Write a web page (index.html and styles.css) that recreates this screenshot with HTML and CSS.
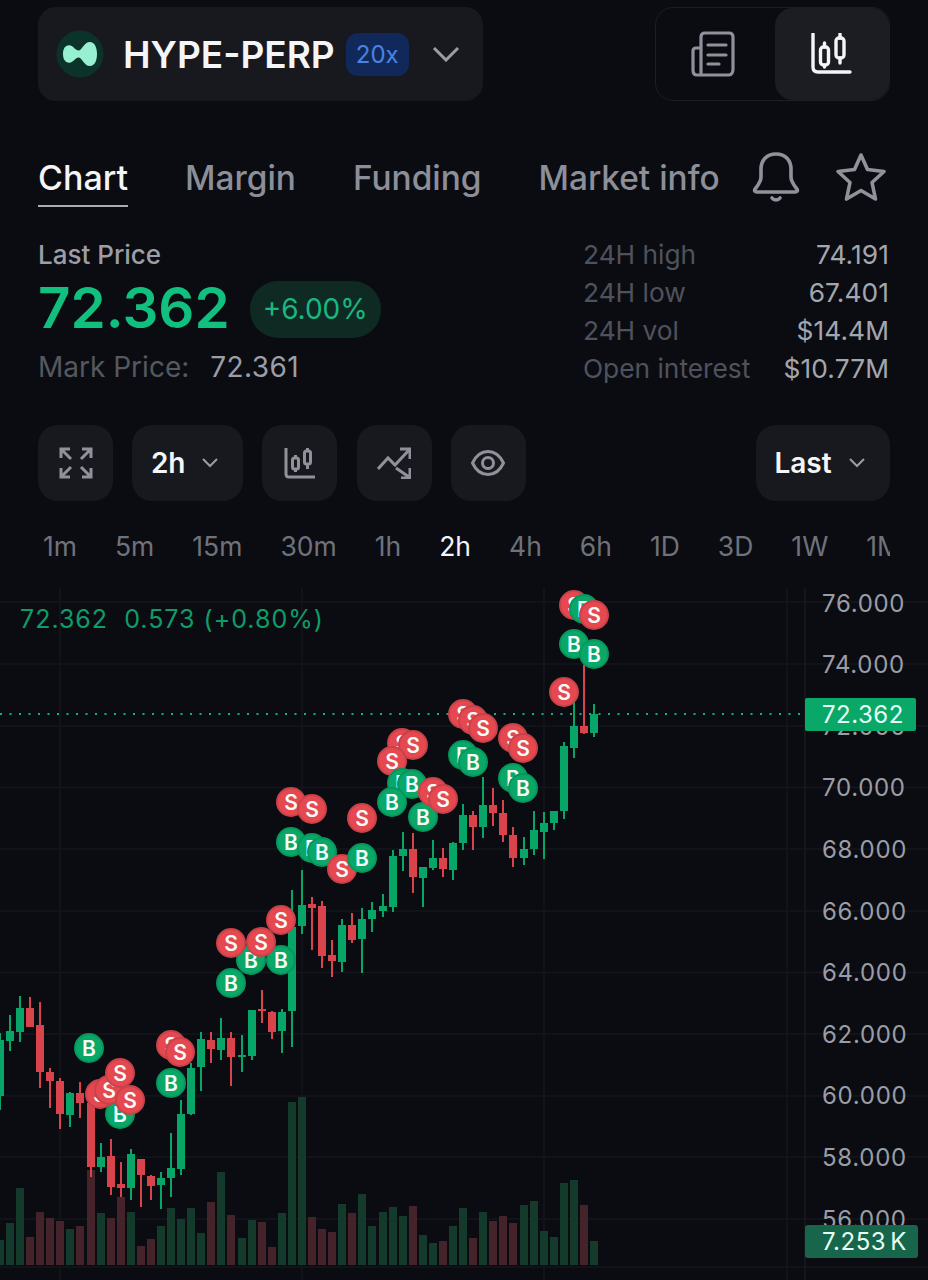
FILE: index.html
```html
<!DOCTYPE html>
<html lang="en">
<head>
    <meta charset="UTF-8">
    <meta name="viewport" content="width=device-width, initial-scale=1.0">
    <title>HYPE-PERP</title>
    <link rel="stylesheet" href="styles.css">
</head>
<body>
    <div class="page">
        <header class="top-bar">
            <div class="market-picker">
                <svg class="coin-logo" viewBox="0 0 48 48">
                    <circle cx="24" cy="24" r="23.5" fill="#0c3329"/>
                    <path d="M7 24C7 17 11 14.500 14.500 15.500C18 16.500 19.500 20.500 22.500 20.500C26 20.500 28 12 34 12C38.500 12 41 17 41 24C41 31 38.500 36 34 36C28 36 26 27.500 22.500 27.500C19.500 27.500 18 31.500 14.500 32.500C11 33.500 7 31 7 24Z" fill="#97f0d2"/>
                </svg>
                <span class="market-name">HYPE-PERP</span>
                <span class="leverage">20x</span>
                <svg class="chevron-big" viewBox="0 0 28 16"><path d="M2 2L14 14L26 2"/></svg>
            </div>
            <div class="view-toggle">
                <div class="toggle-item">
                    <svg class="news-icon" viewBox="0 0 44 46">
                        <path d="M10 42V6C10 3.500 11.500 2 14 2H38C40.500 2 42 3.500 42 6V38C42 41 40.500 44 38 44H6C3.500 44 2 42 2 39V20C2 18 3 17 5 17H10"/>
                        <path d="M17 14H35M17 24H35M17 33H28"/>
                    </svg>
                </div>
                <div class="toggle-item toggle-active">
                    <svg class="candles-icon" viewBox="0 0 42 42">
                        <path d="M3 1V34C3 37 4.500 39 8 39H40"/>
                        <rect x="10.500" y="14" width="8" height="18" rx="3"/>
                        <rect x="26" y="5" width="8" height="20" rx="3"/>
                        <path d="M14.500 10V14M14.500 32V34M30 1V5M30 25V30"/>
                    </svg>
                </div>
            </div>
        </header>

        <nav class="tabs">
            <div class="tab-list">
                <a class="tab tab-active">Chart</a>
                <a class="tab">Margin</a>
                <a class="tab">Funding</a>
                <a class="tab">Market info</a>
            </div>
            <div class="tab-icons">
                <svg class="bell-icon" viewBox="0 0 48 50">
                    <path d="M24 2C14 2 9 9 9 17V25C9 30 6 33 3 37C2 39 3 40 5 40H43C45 40 46 39 45 37C42 33 39 30 39 25V17C39 9 34 2 24 2Z"/>
                    <path d="M20 46C22 48.500 26 48.500 28 46"/>
                </svg>
                <svg class="star-icon" viewBox="0 0 54 50">
                    <path d="M27 3L33.500 17.500L50 19.500L38 30.500L41.500 47L27 38.500L12.500 47L16 30.500L4 19.500L20.500 17.500Z"/>
                </svg>
            </div>
        </nav>

        <section class="stats">
            <div class="price-block">
                <div class="price-label">Last Price</div>
                <div class="price-row">
                    <span class="last-price">72.362</span>
                    <span class="change-pill">+6.00%</span>
                </div>
                <div class="mark-row"><span class="mark-label">Mark Price:</span><span class="mark-value">72.361</span></div>
            </div>
            <dl class="day-stats">
                <dt>24H high</dt><dd>74.191</dd>
                <dt>24H low</dt><dd>67.401</dd>
                <dt>24H vol</dt><dd>$14.4M</dd>
                <dt>Open interest</dt><dd>$10.77M</dd>
            </dl>
        </section>

        <div class="toolbar">
            <button class="tool-btn">
                <svg class="tool-icon" viewBox="0 0 34 32">
                    <path d="M2 11V2H11M2 2L12 12M32 11V2H23M32 2L22 12M2 21V30H11M2 30L12 20M32 21V30H23M32 30L22 20"/>
                </svg>
            </button>
            <button class="tool-btn tool-wide">2h
                <svg class="chevron-small" viewBox="0 0 16 10"><path d="M1 1L8 8L15 1"/></svg>
            </button>
            <button class="tool-btn">
                <svg class="tool-icon" viewBox="0 0 32 32">
                    <path d="M2 1V27C2 29 3 30 5 30H31"/>
                    <rect x="8.500" y="11" width="6" height="11" rx="2"/>
                    <rect x="20.500" y="4" width="6" height="13" rx="2"/>
                    <path d="M11.500 8V11M11.500 22V25M23.500 1V4M23.500 17V22"/>
                </svg>
            </button>
            <button class="tool-btn">
                <svg class="tool-icon" viewBox="0 0 34 32">
                    <path d="M1 22L11 11L18 18L32 3M23 2H33V12M19 21L32 30M33 21V31H24"/>
                </svg>
            </button>
            <button class="tool-btn">
                <svg class="tool-icon" viewBox="0 0 34 26">
                    <path d="M1.500 13C5 5.500 10.500 1.500 17 1.500C23.500 1.500 29 5.500 32.500 13C29 20.500 23.500 24.500 17 24.500C10.500 24.500 5 20.500 1.500 13Z"/>
                    <circle cx="17" cy="13" r="5.500"/>
                </svg>
            </button>
            <button class="tool-btn tool-last">Last
                <svg class="chevron-small" viewBox="0 0 16 10"><path d="M1 1L8 8L15 1"/></svg>
            </button>
        </div>

        <div class="intervals">
            <span>1m</span><span>5m</span><span>15m</span><span>30m</span><span>1h</span>
            <span class="interval-active">2h</span>
            <span>4h</span><span>6h</span><span>1D</span><span>3D</span><span>1W</span><span>1M</span>
        </div>
    </div>

    <svg id="chart" class="chart" viewBox="0 586 928 694"></svg>

    <script src="chart.js"></script>
</body>
</html>
```
FILE: styles.css
```css
* {
    box-sizing: border-box;
}
body {
    font-family: Inter, "Liberation Sans", sans-serif;
    background-color: #0b0c12;
    margin: 0;
    height: 1280px;
    overflow: hidden;
    color: #9a9da6;
}
.page {
    padding: 7px 38px 0;
    height: 586px;
}
svg {
    display: block;
    fill: none;
}

/* header */
.top-bar {
    display: flex;
    justify-content: space-between;
    height: 94px;
}
.market-picker {
    width: 445px;
    background-color: #18191f;
    border-radius: 18px;
    display: flex;
    align-items: center;
    padding-left: 18px;
}
.coin-logo {
    width: 48px;
    height: 48px;
}
.market-name {
    margin-left: 19px;
    font-size: 37px;
    font-weight: 600;
    color: #f4f5f7;
}
.leverage {
    margin-left: 11px;
    width: 63px;
    height: 43px;
    line-height: 43px;
    text-align: center;
    background-color: #11295a;
    border-radius: 12px;
    font-size: 24px;
    color: #4a83e0;
}
.chevron-big {
    width: 28px;
    height: 16px;
    margin-left: 23px;
}
.chevron-big path {
    stroke: #9a9da6;
    stroke-width: 3;
}
.view-toggle {
    width: 235px;
    border: 1px solid #1d1e25;
    border-radius: 18px;
    display: flex;
}
.toggle-item {
    width: 119px;
    padding-right: 4px;
    display: flex;
    align-items: center;
    justify-content: center;
}
.toggle-active {
    width: 115px;
    padding-right: 2px;
    background-color: #1c1d23;
    border-radius: 18px;
}
.news-icon {
    width: 44px;
    height: 46px;
}
.news-icon path {
    stroke: #8f929b;
    stroke-width: 3.2;
    stroke-linecap: round;
    stroke-linejoin: round;
}
.candles-icon {
    width: 42px;
    height: 42px;
}
.candles-icon path,
.candles-icon rect {
    stroke: #f4f5f7;
    stroke-width: 3.4;
    stroke-linecap: round;
}

/* tabs */
.tabs {
    display: flex;
    justify-content: space-between;
    margin-top: 51px;
    height: 55px;
}
.tab-list {
    display: flex;
    gap: 57px;
}
.tab {
    font-size: 33.4px;
    font-weight: 500;
    line-height: 52px;
    height: 55px;
    color: #8c8f99;
    white-space: nowrap;
}
.tab-active {
    font-size: 34px;
    color: #f4f5f7;
    border-bottom: 2px solid #a9acb5;
}
.tab-icons {
    margin-right: 1px;
    display: flex;
    gap: 33px;
}
.tab-icons path {
    stroke: #8f929b;
    stroke-width: 3.6;
    stroke-linecap: round;
    stroke-linejoin: round;
}
.bell-icon {
    width: 48px;
    height: 50px;
}
.star-icon {
    width: 56px;
    height: 50px;
}

/* price stats */
.stats {
    display: flex;
    justify-content: space-between;
    margin-top: 31px;
    height: 148px;
}
.price-label {
    font-size: 26px;
    font-weight: 500;
    line-height: 34px;
    color: #9b9ea7;
}
.price-row {
    display: flex;
    align-items: center;
    gap: 20px;
    height: 57px;
    margin-top: 9px;
}
.last-price {
    font-size: 56.5px;
    font-weight: 600;
    color: #11c07f;
    margin-bottom: 4px;
}
.change-pill {
    width: 131px;
    height: 57px;
    line-height: 57px;
    text-align: center;
    border-radius: 28px;
    background-color: #0e2a23;
    color: #1bb781;
    font-size: 28px;
}
.mark-row {
    margin-top: 10px;
    font-size: 28px;
    line-height: 38px;
}
.mark-label {
    color: #55585f;
}
.mark-value {
    margin-left: 21px;
    color: #9b9ea7;
    letter-spacing: 0.4px;
}
.day-stats {
    margin: 0;
    width: 307px;
    display: grid;
    grid-template-columns: auto auto;
    justify-content: space-between;
    grid-auto-rows: 38px;
    font-size: 26.3px;
    line-height: 34px;
}
.day-stats dt {
    color: #4f525c;
}
.day-stats dd {
    margin: 0 1px 0 0;
    text-align: right;
    color: #a3a6ae;
    letter-spacing: 0.1px;
}

/* toolbar */
.toolbar {
    display: flex;
    gap: 19.2px;
    margin-top: 39px;
}
.tool-btn {
    width: 75px;
    height: 76px;
    border: none;
    border-radius: 20px;
    background-color: #18191f;
    display: flex;
    align-items: center;
    justify-content: center;
    font-family: inherit;
    font-size: 28px;
    font-weight: 600;
    color: #f4f5f7;
    padding: 0;
}
.tool-wide {
    width: 111px;
    gap: 17px;
    padding-right: 6px;
}
.tool-last {
    width: 134px;
    gap: 17px;
    margin-left: auto;
    padding-right: 7px;
}
.tool-icon {
    width: 34px;
    height: 32px;
}
.tool-icon path,
.tool-icon rect,
.tool-icon circle {
    stroke: #8f929b;
    stroke-width: 3;
}
.chevron-small {
    width: 16px;
    height: 10px;
}
.chevron-small path {
    stroke: #9a9da6;
    stroke-width: 2;
}

/* interval row */
.intervals {
    display: flex;
    gap: 38px;
    margin-top: 27px;
    padding-left: 5px;
    overflow: hidden;
    white-space: nowrap;
    font-size: 26.5px;
    line-height: 36px;
    color: #6f727b;
}
.interval-active {
    color: #f4f5f7;
}

/* chart */
.chart {
    width: 928px;
    height: 694px;
}
.grid-line {
    stroke: #15161c;
    stroke-width: 1.500;
}
.axis-line {
    stroke: #191a20;
    stroke-width: 1.500;
}
.last-line {
    stroke: #17b07a;
    stroke-width: 2;
    stroke-dasharray: 2 7.500;
}
.up {
    fill: #07a568;
}
.down {
    fill: #d8434c;
}
.vol-up {
    fill: #143a2c;
}
.vol-down {
    fill: #45232a;
}
.axis-label {
    fill: #9a9da6;
    font-size: 24px;
    letter-spacing: 0.7px;
}
.legend {
    fill: #0f9c68;
    font-size: 25px;
    letter-spacing: 1px;
    white-space: pre;
}
.tag-price {
    fill: #0aa868;
}
.tag-volume {
    fill: #17654a;
}
.tag-text {
    fill: #e6fff4;
    font-size: 24px;
    letter-spacing: 0.5px;
    word-spacing: -3px;
}
.marker-b {
    fill: #0aa868;
    stroke: #07965c;
    stroke-width: 2;
}
.marker-s {
    fill: #e5484f;
    stroke: #c8424a;
    stroke-width: 2;
}
.marker-letter {
    fill: #f6fbf8;
    font-size: 21px;
    font-weight: 600;
    text-anchor: middle;
}
```
FILE: chart.js
```js
// [wick top, body top, body bottom, wick bottom, up/down], left to right
const candles = [
    [1033,1040,1096,1110,1],[1015,1031,1041,1051,1],[996,1008,1032,1042,1],[997,1008,1027,1027,0],
    [1002,1025,1072,1088,0],[1068,1072,1081,1108,0],[1078,1081,1114,1129,0],[1092,1093,1115,1127,1],
    [1082,1093,1103,1118,0],[1102,1103,1167,1177,0],[1143,1157,1167,1172,1],[1139,1156,1187,1195,0],
    [1162,1184,1188,1197,0],[1149,1154,1188,1200,1],[1159,1159,1175,1207,0],[1175,1176,1186,1200,0],
    [1172,1178,1185,1209,1],[1133,1168,1178,1197,1],[1100,1114,1169,1175,1],[1063,1068,1114,1115,1],
    [1032,1039,1067,1091,1],[1032,1040,1049,1063,0],[1018,1038,1050,1060,1],[1032,1038,1057,1086,0],
    [1035,1055,1056,1072,1],[1010,1010,1056,1060,1],[990,1009,1011,1023,0],[1011,1012,1032,1039,0],
    [1009,1012,1031,1053,1],[890,927,1011,1047,1],[870,905,926,934,1],[897,904,908,950,0],
    [901,906,956,968,0],[940,955,961,977,0],[919,925,962,972,1],[913,925,940,943,0],
    [908,919,939,973,1],[902,910,919,932,1],[894,906,911,917,1],[850,856,907,912,1],
    [832,849,856,871,1],[833,849,877,893,0],[867,867,878,907,1],[840,858,868,870,1],
    [848,858,869,877,0],[842,843,870,880,1],[804,815,843,850,1],[811,815,827,850,0],
    [777,805,827,838,1],[788,805,813,826,0],[800,813,835,842,0],[827,835,858,867,0],
    [837,849,858,865,1],[811,830,849,855,1],[812,823,832,859,1],[811,811,823,830,1],
    [742,746,811,819,1],[702,726,748,758,1],[665,726,733,734,0],[704,714,733,737,1]
];
// top of each volume bar, same order
const volumes = [
    1240,1223,1188,1237,1212,1218,1221,1229,1226,1170,1213,1218,1197,1212,1246,1239,
    1226,1208,1219,1208,1233,1202,1172,1215,1238,1220,1222,1247,1213,1102,1097,1217,
    1229,1232,1204,1213,1194,1226,1212,1207,1216,1206,1235,1243,1241,1226,1208,1238,
    1212,1221,1216,1223,1205,1201,1231,1237,1183,1180,1205,1241
];
// trade markers in paint order
const markers = [
    ['B',89,1048],['B',120,1114],['S',100,1094],['S',109,1090],['S',120,1073],['S',130,1100],
    ['S',171,1045],['S',180,1052],['B',171,1083],
    ['B',231,983],['B',251,960],['B',281,960],['S',231,943],['S',261,942],['S',281,920],
    ['S',291,802],['S',312,809],['B',291,842],['B',312,848],['B',322,852],['S',342,869],['B',362,858],['S',362,818],
    ['S',402,743],['S',413,745],['S',392,761],['B',402,783],['B',412,784],['B',392,802],['B',423,817],
    ['S',433,792],['S',443,799],
    ['S',463,714],['S',473,720],['S',483,728],['B',463,755],['B',473,762],
    ['S',513,738],['S',523,748],['B',513,778],['B',523,788],
    ['S',574,605],['B',584,609],['S',594,615],['B',574,644],['B',594,654],['S',564,692]
];
const gridRows = [602,664,726,787.5,849,911,972.5,1034,1096,1157,1219,1267];
const gridCols = [60,302,544,787];
const axisPrices = ['76.000','74.000','72.000','70.000','68.000','66.000','64.000','62.000','60.000','58.000','56.000'];

let svg = '';
gridRows.forEach(function(y) {
    svg += `<line class="grid-line" x1="0" x2="928" y1="${y}" y2="${y}"/>`;
});
gridCols.forEach(function(x) {
    svg += `<line class="grid-line" x1="${x}" x2="${x}" y1="588" y2="1280"/>`;
});
svg += '<line class="axis-line" x1="805" x2="805" y1="588" y2="1280"/>';

const xAt = function(i) {
    return Math.round(594 - 10.07 * (candles.length - 1 - i));
};

volumes.forEach(function(top, i) {
    const side = candles[i][4] ? 'vol-up' : 'vol-down';
    svg += `<rect class="${side}" x="${xAt(i) - 4}" y="${top}" width="8" height="${1265 - top}"/>`;
});

svg += '<line class="last-line" x1="0" x2="805" y1="714" y2="714"/>';

candles.forEach(function(c, i) {
    const side = c[4] ? 'up' : 'down';
    const x = xAt(i);
    svg += `<rect class="${side}" x="${x - 1}" y="${c[0]}" width="2" height="${c[3] - c[0]}"/>`;
    svg += `<rect class="${side}" x="${x - 4}" y="${c[1]}" width="8" height="${Math.max(c[2] - c[1], 2)}"/>`;
});

markers.forEach(function(m) {
    svg += `<circle class="marker-${m[0].toLowerCase()}" cx="${m[1]}" cy="${m[2]}" r="14"/>`;
    svg += `<text class="marker-letter" x="${m[1]}" y="${m[2] + 7.5}">${m[0]}</text>`;
});

axisPrices.forEach(function(label, i) {
    svg += `<text class="axis-label" x="822" y="${611.5 + i * 61.6}">${label}</text>`;
});

svg += '<text class="legend" x="20" y="628">72.362  0.573 (+0.80%)</text>';
svg += '<rect class="tag-price" x="805" y="698" width="111" height="33" rx="2"/>';
svg += '<text class="tag-text" x="822" y="723">72.362</text>';
svg += '<rect class="tag-volume" x="805" y="1225" width="113" height="33" rx="3"/>';
svg += '<text class="tag-text" x="822" y="1250">7.253 K</text>';

document.getElementById('chart').innerHTML = svg;
```
